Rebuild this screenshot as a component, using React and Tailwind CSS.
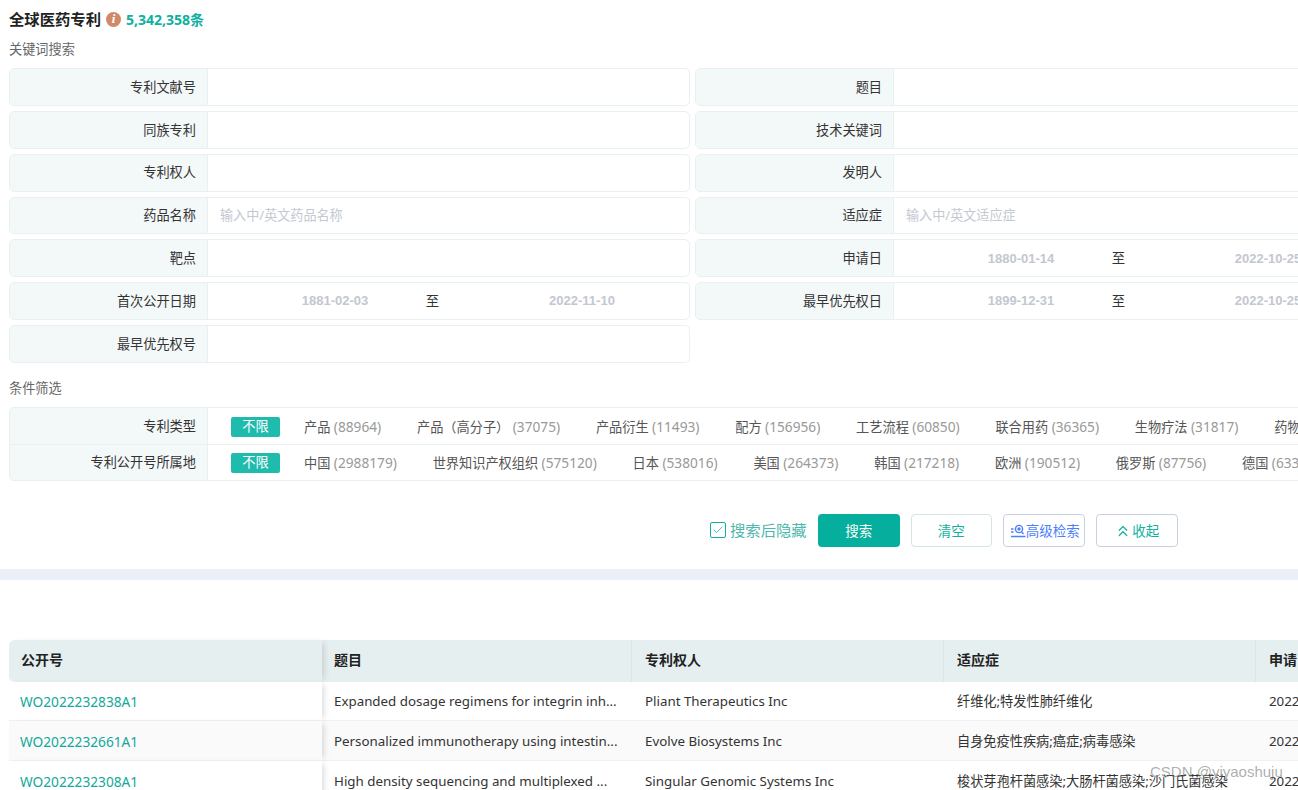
import React from "react";
import { Check, ChevronsUp } from "lucide-react";

const FONT = "font-['Noto_Sans','Noto_Sans_CJK_SC',sans-serif]";

const Label = ({ children }) => (
  <div className="w-[198px] shrink-0 h-full flex items-center justify-end pr-[11px] pt-[1.5px] bg-[#f3f8f8] border-r border-[#e8f0f0] text-[13.2px] text-[#333]">{children}</div>
);

const Field = ({ label, placeholder, children }) => (
  <div className="h-[37.85px] flex items-center rounded-[5px] border border-[#e9f0f0] overflow-hidden bg-white">
    <Label>{label}</Label>
    {placeholder ? <span className="pl-3 text-[13.1px] text-[#c3c8d2]">{placeholder}</span> : children}
  </div>
);

const DateRange = ({ from, to }) => (
  <div className="flex-1 h-full flex items-center font-['Liberation_Sans',sans-serif] text-[13px] font-bold text-[#c3c7d1]">
    <span className="w-[205px] shrink-0 text-center pl-[49px]">{from}</span>
    <span className="w-[39px] shrink-0 text-center text-[13.33px] font-normal text-[#333] font-['Noto_Sans_CJK_SC',sans-serif]">至</span>
    <span className="w-[225px] shrink-0 text-center pl-[35px]">{to}</span>
  </div>
);

const FilterRow = ({ label, items, first }) => (
  <div className={`flex items-center ${first ? "h-[37px] border-b border-[#e9f0f0]" : "h-[35px]"}`}>
    <Label>{label}</Label>
    <span className={`ml-[23px] shrink-0 w-[49px] h-5 rounded-[2px] bg-[#1fbcad] text-white text-[13.2px] flex items-center justify-center ${first ? "mt-[2px]" : "mt-[1px]"}`}>不限</span>
    <div className={`ml-[24px] flex items-center whitespace-nowrap text-[13.2px] gap-x-[35.8px] ${first ? "mt-[2px]" : "mt-[1px]"}`}>
      {items.map(([name, count]) => (
        <span key={name} className="text-[#555]">{name} <span className="text-[13.7px] text-[#999]">({count})</span></span>
      ))}
    </div>
  </div>
);

const AdvancedIcon = () => (
  <svg width="15" height="14" viewBox="0 0 15 14" fill="none" stroke="#4d7ffb" strokeWidth="1.4" className="shrink-0">
    <circle cx="8" cy="5" r="3.6" />
    <circle cx="8" cy="5" r="1" fill="#4d7ffb" />
    <path d="M10.6 8l2 2M0 12.5h14.5M0 5h2.5M0 8h2.5" />
  </svg>
);

const rows = [
  ["WO2022232838A1", "Expanded dosage regimens for integrin inh...", "Pliant Therapeutics Inc", "纤维化;特发性肺纤维化", "bg-white", "h-[39px]", "pt-[2px]"],
  ["WO2022232661A1", "Personalized immunotherapy using intestin...", "Evolve Biosystems Inc", "自身免疫性疾病;癌症;病毒感染", "bg-[#fafafa]", "h-[40px]", "pt-[3px]"],
  ["WO2022232308A1", "High density sequencing and multiplexed ...", "Singular Genomic Systems Inc", "梭状芽孢杆菌感染;大肠杆菌感染;沙门氏菌感染", "bg-white", "h-[40px]", "pt-[3px]"],
];

const types = [["产品", "88964"], ["产品（高分子）", "37075"], ["产品衍生", "11493"], ["配方", "156956"], ["工艺流程", "60850"], ["联合用药", "36365"], ["生物疗法", "31817"], ["药物用途", "30215"]];
const places = [["中国", "2988179"], ["世界知识产权组织", "575120"], ["日本", "538016"], ["美国", "264373"], ["韩国", "217218"], ["欧洲", "190512"], ["俄罗斯", "87756"], ["德国", "63325"]];

export default function App() {
  return (
    <div className={`relative w-[1298px] h-[790px] overflow-hidden bg-white ${FONT}`}>
      <div className="pl-[9px]">
        <div className="h-[38px] flex items-center gap-[5px]">
          <span className="text-[15.33px] font-bold text-[#222]">全球医药专利</span>
          <span className="w-[15px] h-[15px] rounded-full bg-[#d08a68] text-white text-[13px] italic font-bold flex items-center justify-center font-['Liberation_Serif',serif]">i</span>
          <span className="text-[14px] font-bold text-[#0fb0a0]">5,342,358条</span>
        </div>
        <div className="h-[22px] pt-[2px] flex items-center text-[13.2px] text-[#666]">关键词搜索</div>

        <div className="mt-[8px] w-[1372px] grid grid-cols-[681px_681px] gap-x-[5px] gap-y-[5px]">
          <Field label="专利文献号" />
          <Field label="题目" />
          <Field label="同族专利" />
          <Field label="技术关键词" />
          <Field label="专利权人" />
          <Field label="发明人" />
          <Field label="药品名称" placeholder="输入中/英文药品名称" />
          <Field label="适应症" placeholder="输入中/英文适应症" />
          <Field label="靶点" />
          <Field label="申请日"><DateRange from="1880-01-14" to="2022-10-25" /></Field>
          <Field label="首次公开日期"><DateRange from="1881-02-03" to="2022-11-10" /></Field>
          <Field label="最早优先权日"><DateRange from="1899-12-31" to="2022-10-25" /></Field>
          <Field label="最早优先权号" />
        </div>

        <div className="mt-[14px] h-[22px] pt-[2px] flex items-center text-[13.2px] text-[#666]">条件筛选</div>
        <div className="mt-[8px] w-[1400px] rounded-[5px] border border-[#e9f0f0] overflow-hidden">
          <FilterRow label="专利类型" items={types} first />
          <FilterRow label="专利公开号所属地" items={places} />
        </div>
      </div>

      <div className="mt-[33px] h-[33px] flex items-center text-[13.5px] text-[#12b0a0]">
        <span className="ml-[710px] w-4 h-4 rounded-[2px] border border-[#12b0a0] flex items-center justify-center"><Check size={12} strokeWidth={1.5} /></span>
        <span className="ml-1 text-[15.33px] text-[#4fb8ac]">搜索后隐藏</span>
        <button className="ml-[11px] w-[82px] h-[33px] pt-px rounded-[4px] bg-[#06ae9d] text-white">搜索</button>
        <button className="ml-[11px] w-[81px] h-[33px] pt-px rounded-[4px] border border-[#d5e5e4] bg-white">清空</button>
        <button className="ml-[11px] w-[82px] h-[33px] pt-px pl-[7px] rounded-[4px] border border-[#c8d1e0] bg-white text-[#4d7ffb] flex items-center justify-start"><AdvancedIcon />高级检索</button>
        <button className="ml-[11px] w-[82px] h-[33px] pt-px rounded-[4px] border border-[#c8d1e0] bg-white flex items-center justify-center"><ChevronsUp size={18} strokeWidth={1.6} />收起</button>
      </div>

      <div className="mt-[22px] h-[11px] bg-[#ebeff7]" />

      <div className="ml-[9px] mt-[60px] w-[1400px] text-[13.33px] text-[#333]">
        <div className="h-[42px] flex items-center bg-[#e6eff0] rounded-[6px] text-[14px] font-bold text-[#222]">
          <div className="relative w-[313px] h-full flex items-center pl-3 pb-[2px] shrink-0 rounded-l-[6px] bg-[#e6eff0] shadow-[5px_0_6px_-3px_rgba(0,0,0,0.14)]">公开号</div>
          <div className="w-[310px] h-full flex items-center pl-[12px] pb-[2px] shrink-0 border-r border-[#d8e8e8]">题目</div>
          <div className="w-[312px] h-full flex items-center pl-[13px] pb-[2px] shrink-0 border-r border-[#d8e8e8]">专利权人</div>
          <div className="w-[312px] h-full flex items-center pl-[13px] pb-[2px] shrink-0 border-r border-[#d8e8e8]">适应症</div>
          <div className="pl-[13px] pb-[2px]">申请日</div>
        </div>
        {rows.map(([no, title, owner, ind, bg, h, pad]) => (
          <div key={no} className={`${h} ${bg} flex items-center border-b border-[#f0f0f6]`}>
            <div className={`relative self-start w-[313px] h-[calc(100%+1px)] flex items-center pl-[11px] ${pad} shrink-0 border-b border-[#f0f0f6] text-[13.7px] text-[#12a89a] ${bg} shadow-[5px_0_6px_-3px_rgba(0,0,0,0.14)]`}>{no}</div>
            <div className={`w-[310px] pl-[12px] ${pad} shrink-0 whitespace-nowrap`}>{title}</div>
            <div className={`w-[312px] pl-[13px] ${pad} shrink-0 whitespace-nowrap`}>{owner}</div>
            <div className={`w-[312px] pl-[13px] ${pad} shrink-0 whitespace-nowrap text-[13.2px]`}>{ind}</div>
            <div className={`pl-[13px] ${pad}`}>2022-01-01</div>
          </div>
        ))}
      </div>

      <div className="absolute left-[1150px] top-[761px] font-['Liberation_Sans',sans-serif] text-[15px] text-[#777]/60">CSDN @yiyaoshuju</div>
    </div>
  );
}
